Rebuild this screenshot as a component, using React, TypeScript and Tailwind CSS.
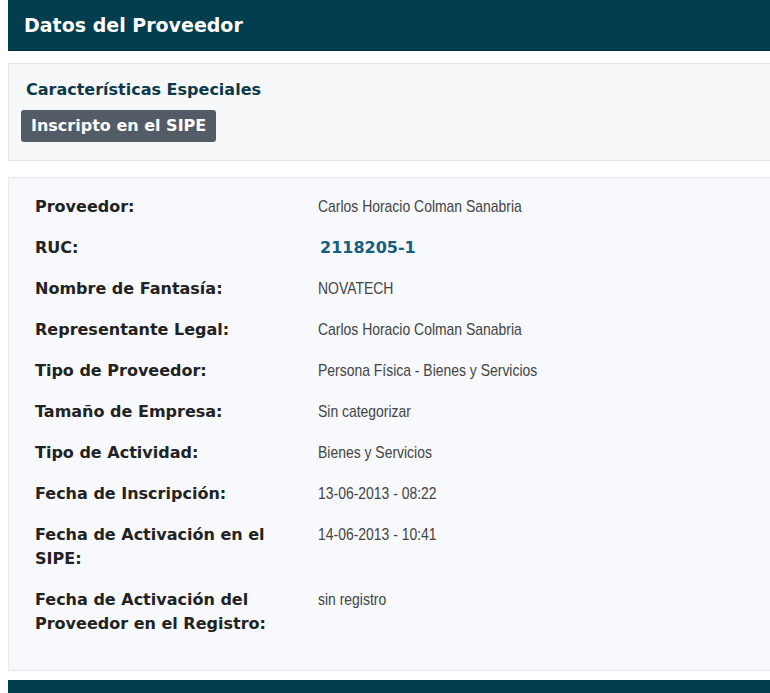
const filas: { etiqueta: string; valor: string; ruc?: boolean }[] = [
  { etiqueta: 'Proveedor:', valor: 'Carlos Horacio Colman Sanabria' },
  { etiqueta: 'RUC:', valor: '2118205-1', ruc: true },
  { etiqueta: 'Nombre de Fantasía:', valor: 'NOVATECH' },
  { etiqueta: 'Representante Legal:', valor: 'Carlos Horacio Colman Sanabria' },
  { etiqueta: 'Tipo de Proveedor:', valor: 'Persona Física - Bienes y Servicios' },
  { etiqueta: 'Tamaño de Empresa:', valor: 'Sin categorizar' },
  { etiqueta: 'Tipo de Actividad:', valor: 'Bienes y Servicios' },
  { etiqueta: 'Fecha de Inscripción:', valor: '13-06-2013 - 08:22' },
  { etiqueta: 'Fecha de Activación en el SIPE:', valor: '14-06-2013 - 10:41' },
  { etiqueta: 'Fecha de Activación del Proveedor en el Registro:', valor: 'sin registro' },
];

const negrita = "font-['DejaVu_Sans',sans-serif] font-bold";
// valores en letra angosta, tipo Arial Narrow
const angosta = "font-['Liberation_Sans',Arial,sans-serif]";

export default function App() {
  return (
    <div className="w-[770px] h-[693px] overflow-hidden bg-white">
      <div className="ml-2 w-[800px]">
        <div className="h-[51px] bg-[#033d50] border-b border-[#022a38] flex items-center pl-4">
          <h1 className={`${negrita} text-[19px] text-white leading-none`}>Datos del Proveedor</h1>
        </div>

        <div className="mt-3 bg-[#f7f8fa] border border-[#e3e5e8] pl-3 pt-[16px] pb-4 h-[98px]">
          <h2 className={`${negrita} text-[16px] text-[#0c3a4a] leading-5 pl-[5px]`}>
            Características Especiales
          </h2>
          <span className={`${negrita} mt-[10px] inline-flex h-8 items-center px-[10px] rounded-[3px] bg-[#535b67] text-white text-[16px]`}>
            Inscripto en el SIPE
          </span>
        </div>

        <div className="mt-4 bg-[#f7f9fc] border border-[#e6e8eb] pl-[26px] pt-[17px] pb-[16px] h-[494px]">
          <div className="grid grid-cols-[268px_1fr] gap-x-[15px] gap-y-[17px] items-baseline">
            {filas.map(f => (
              <div key={f.etiqueta} className="contents">
                <div className={`${negrita} text-[16px] leading-6 text-[#222]`}>{f.etiqueta}</div>
                {f.ruc ? (
                  <div className={`${negrita} text-[16px] leading-6 text-[#155f7c] pl-[2px]`}>{f.valor}</div>
                ) : (
                  <div className={`${angosta} text-[17px] leading-6 text-[#444]`}>
                    <span className="inline-block origin-left scale-x-[0.82] whitespace-nowrap">{f.valor}</span>
                  </div>
                )}
              </div>
            ))}
          </div>
        </div>

        <div className="mt-[9px] h-[20px] bg-[#033d50]" />
      </div>
    </div>
  );
}
